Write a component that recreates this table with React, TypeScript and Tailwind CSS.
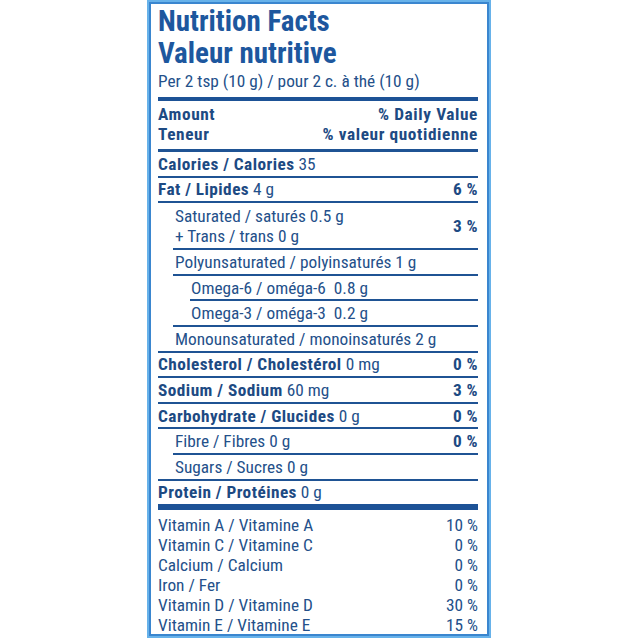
type Row = {
  bold?: string
  rest?: string
  lines?: string[]
  dv?: string
  indent?: 0 | 1 | 2
  line?: 'full' | 'sub' | 'subsub'
  tall?: boolean
}

const rows: Row[] = [
  { bold: 'Calories / Calories', rest: ' 35', line: 'full' },
  { bold: 'Fat / Lipides', rest: ' 4 g', dv: '6 %', line: 'full' },
  { lines: ['Saturated / saturés 0.5 g', '+ Trans / trans 0 g'], dv: '3 %', indent: 1, line: 'sub', tall: true },
  { rest: 'Polyunsaturated / polyinsaturés 1 g', indent: 1, line: 'sub' },
  { rest: 'Omega-6 / oméga-6\u00a0\u00a00.8 g', indent: 2, line: 'subsub' },
  { rest: 'Omega-3 / oméga-3\u00a0\u00a00.2 g', indent: 2, line: 'sub' },
  { rest: 'Monounsaturated / monoinsaturés 2 g', indent: 1, line: 'full' },
  { bold: 'Cholesterol / Cholestérol', rest: ' 0 mg', dv: '0 %', line: 'full' },
  { bold: 'Sodium / Sodium', rest: ' 60 mg', dv: '3 %', line: 'full' },
  { bold: 'Carbohydrate / Glucides', rest: ' 0 g', dv: '0 %', line: 'full' },
  { rest: 'Fibre / Fibres 0 g', dv: '0 %', indent: 1, line: 'sub' },
  { rest: 'Sugars / Sucres 0 g', indent: 1, line: 'full' },
  { bold: 'Protein / Protéines', rest: ' 0 g' },
]

const vitamins = [
  ['Vitamin A / Vitamine A', '10 %'],
  ['Vitamin C / Vitamine C', '0 %'],
  ['Calcium / Calcium', '0 %'],
  ['Iron / Fer', '0 %'],
  ['Vitamin D / Vitamine D', '30 %'],
  ['Vitamin E / Vitamine E', '15 %'],
]

const lineIndent = { full: 'ml-0', sub: 'ml-[15px]', subsub: 'ml-[32px]' }
const textIndent = { 0: 'pl-0', 1: 'pl-[17px]', 2: 'pl-[33px]' }

function NutrientRow({ row }: { row: Row }) {
  const indent = row.indent ?? 0
  return (
    <div>
      <div className={`flex items-center justify-between ${row.tall ? 'h-[45px] pt-[1px]' : 'h-[23.6px]'} ${textIndent[indent]}`}>
        <div className="leading-[20px]">
          {row.lines ? (
            row.lines.map((l) => <div key={l}>{l}</div>)
          ) : (
            <span className="whitespace-pre">
              {row.bold && <span className="font-bold tracking-[0.45px] text-[#1d4a83]">{row.bold}</span>}
              {row.rest}
            </span>
          )}
        </div>
        {row.dv && <div className="font-bold tracking-[0.45px] text-[#1d4a83] leading-[20px]">{row.dv}</div>}
      </div>
      {row.line && <div className={`h-[2px] bg-[#1f5394] ${lineIndent[row.line]}`} />}
    </div>
  )
}

export default function App() {
  return (
    <div className="w-[640px] h-[640px] bg-white" style={{ fontFamily: '"Roboto Condensed", Roboto, "Liberation Sans", sans-serif' }}>
      <div className="ml-[147px] w-[344px] h-[638px] border-2 border-[#67b2ea] overflow-hidden">
        <div className="h-full border-2 border-[#3a86cf] pl-[7px] pr-[9px] pt-[1px] text-[17.3px] text-[#24508a]">
          <div className="text-[29px] leading-[32px] font-bold text-[#1d579e]">
            <div>Nutrition Facts</div>
            <div>Valeur nutritive</div>
          </div>
          <div className="mt-[2px] leading-[20px]">Per 2 tsp (10 g) / pour 2 c. à thé (10 g)</div>
          <div className="mt-[6px] h-[4px] bg-[#1d5296]" />

          <div className="pt-[3px] pb-[5px] font-bold text-[#1d4a83] leading-[20px] tracking-[0.6px]">
            <div className="flex justify-between">
              <span>Amount</span>
              <span>% Daily Value</span>
            </div>
            <div className="flex justify-between">
              <span>Teneur</span>
              <span>% valeur quotidienne</span>
            </div>
          </div>
          <div className="h-[3px] bg-[#1f5394]" />

          {rows.map((row, i) => (
            <NutrientRow key={i} row={row} />
          ))}

          <div className="h-[6px] bg-[#1d5296]" />

          <div className="pt-[5px] leading-[20px]">
            {vitamins.map(([name, dv]) => (
              <div key={name} className="flex justify-between">
                <span>{name}</span>
                <span>{dv}</span>
              </div>
            ))}
          </div>
        </div>
      </div>
    </div>
  )
}
